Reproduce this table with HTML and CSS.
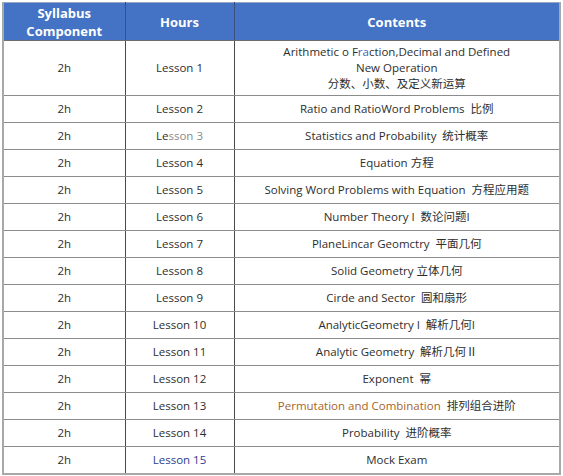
FILE: index.html
```html
<!DOCTYPE html>
<html>
<head>
<meta charset="utf-8">
<link rel="stylesheet" href="styles.css">
</head>
<body>
<table class="syllabus">
  <colgroup>
    <col class="c1"><col class="c2"><col class="c3">
  </colgroup>
  <thead>
    <tr><th>Syllabus<br>Component</th><th>Hours</th><th>Contents</th></tr>
  </thead>
  <tbody>
    <tr class="tall"><td>2h</td><td>Lesson 1</td><td>Arithmetic o F<span class="blue">ra</span>ction,Decimal and Defined<br>New Operation<br>分数、小数、及定义新运算</td></tr>
    <tr><td>2h</td><td>Lesson 2</td><td>Ratio and RatioWord Problems&nbsp; 比例</td></tr>
    <tr><td>2h</td><td>Le<span class="light">sson 3</span></td><td>Statistics and Probability&nbsp; 统计概率</td></tr>
    <tr><td>2h</td><td>Lesson 4</td><td>Equation 方程</td></tr>
    <tr><td>2h</td><td>Lesson 5</td><td>Solving Word Problems with Equation&nbsp; 方程应用题</td></tr>
    <tr><td>2h</td><td>Lesson 6</td><td>Number Theory I&nbsp; 数论问题I</td></tr>
    <tr><td>2h</td><td>Lesson 7</td><td>PlaneLincar Geomctry&nbsp; 平面几何</td></tr>
    <tr><td>2h</td><td>Lesson 8</td><td>Solid Geometry 立体几何</td></tr>
    <tr><td>2h</td><td>Lesson 9</td><td>Cirde and Sector&nbsp; 圆和扇形</td></tr>
    <tr><td>2h</td><td>Lesson 10</td><td>AnalyticGeometry I&nbsp; 解析几何I</td></tr>
    <tr><td>2h</td><td>Lesson 11</td><td>Analytic Geometry&nbsp; 解析几何Ⅱ</td></tr>
    <tr><td>2h</td><td>Lesson 12</td><td>Exponent&nbsp; 幂</td></tr>
    <tr><td>2h</td><td>Lesson 13</td><td><span class="brown">Permutation and Combination</span>&nbsp; 排列组合进阶</td></tr>
    <tr><td>2h</td><td>Lesson 14</td><td>Probability&nbsp; 进阶概率</td></tr>
    <tr><td>2h</td><td class="navy">Lesson 15</td><td>Mock Exam</td></tr>
  </tbody>
</table>
</body>
</html>
```

FILE: styles.css
```css
html, body {
  margin: 0;
  padding: 0;
  background: #ffffff;
}
body {
  padding: 2px 0 0 2px;
}
.syllabus {
  border-collapse: collapse;
  width: 557px;
  table-layout: fixed;
  font-family: "Open Sans", "Noto Sans CJK SC", sans-serif;
  font-size: 11.5px;
  color: #2e2e2e;
  border: 2px solid #a8a8a8;
  border-top: 1px solid #9aa6c0;
}
.c1 { width: 122px; }
.c2 { width: 109px; }
.c3 { width: 326px; }
.syllabus th {
  background: #4472c4;
  color: #ffffff;
  font-weight: 700;
  font-size: 13px;
  line-height: 18px;
  height: 37px;
  padding: 0;
  text-align: center;
  vertical-align: middle;
  border-left: 1px solid #3a4f80;
  border-bottom: 1px solid #6d6d6d;
}
.syllabus td {
  height: 26px;
  padding: 0;
  text-align: center;
  vertical-align: middle;
  line-height: 16px;
  border-left: 1px solid #4a4a4a;
  border-bottom: 1px solid #8c8c8c;
}
.syllabus th:first-child,
.syllabus td:first-child {
  border-left: none;
}
.syllabus tr.tall td {
  height: 54px;
}
.blue { color: #3b63b8; }
.light { color: #8a8a8a; }
.brown { color: #a8642c; }
.navy { color: #2e3d92; }
```
